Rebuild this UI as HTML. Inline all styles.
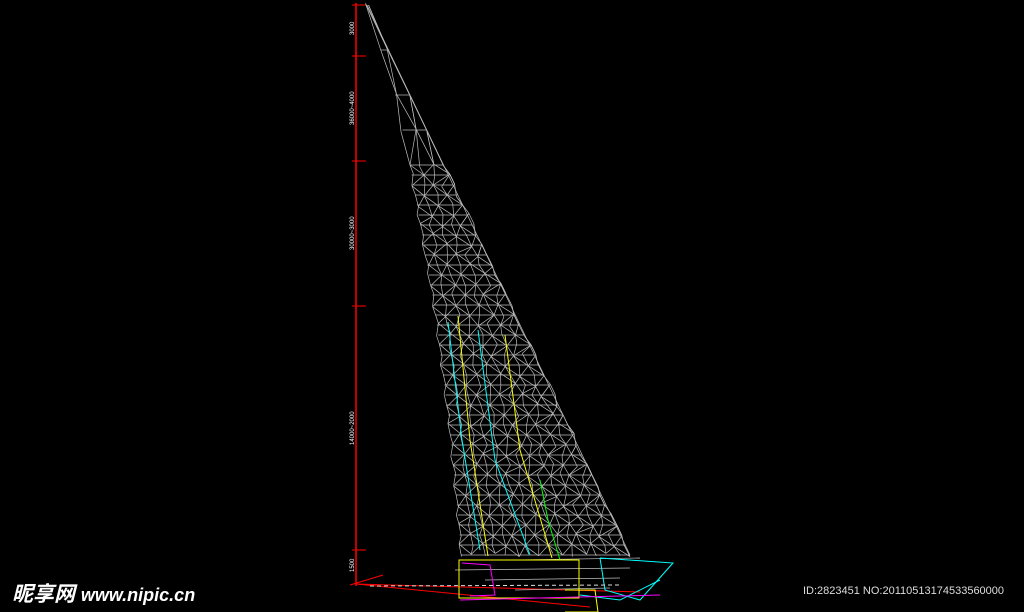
<!DOCTYPE html>
<html><head><meta charset="utf-8"><style>
html,body{margin:0;padding:0;background:#000;width:1024px;height:612px;overflow:hidden}
svg{position:absolute;left:0;top:0}
.wm{position:absolute;left:12px;top:578px;color:#fff;font:italic bold 21px "Liberation Sans","Noto Sans CJK SC",sans-serif}
.wm span{font-size:18px;font-weight:bold}
.id{position:absolute;left:803px;top:585px;color:#ddd;font:11px "Liberation Sans",sans-serif}
</style></head><body>
<svg id="s" width="1024" height="612" viewBox="0 0 1024 612">
<line x1="356" y1="3" x2="356" y2="586" stroke="#f00" stroke-width="1.5"/>
<g stroke="#f00" stroke-width="1">
<line x1="352" y1="5" x2="366" y2="5"/><line x1="352" y1="56" x2="366" y2="56"/>
<line x1="352" y1="161" x2="366" y2="161"/><line x1="352" y1="306" x2="366" y2="306"/>
<line x1="352" y1="550" x2="366" y2="550"/><line x1="350" y1="585" x2="383" y2="575"/>
<line x1="356" y1="584" x2="590" y2="607"/><line x1="356" y1="584" x2="640" y2="592"/>
</g>
<g fill="#fff" font-family="Liberation Sans" font-size="6">
<text transform="translate(354,35) rotate(-90)">3000</text>
<text transform="translate(354,125) rotate(-90)">36000~4000</text>
<text transform="translate(354,250) rotate(-90)">30000~3000</text>
<text transform="translate(354,445) rotate(-90)">14000~2000</text>
<text transform="translate(354,572) rotate(-90)">1500</text>
</g>
<g id="mesh" stroke="#bdbdbd" stroke-width="0.7" fill="none"></g>
<g fill="none" stroke-width="1">
<polyline points="458,316 470,440 488,556" stroke="#ff0"/>
<polyline points="505,335 520,450 552,558" stroke="#ff0"/>
<polyline points="448,322 462,440 480,550" stroke="#0ff"/>
<polyline points="478,330 495,460 530,555" stroke="#0ff"/>
<polyline points="540,480 548,520 560,560" stroke="#0f0"/>
<rect x="459" y="560" width="120" height="38" stroke="#ff0"/>
<polyline points="462,563 490,565 495,595 470,596" stroke="#f0f"/>
<polyline points="600,558 673,563 640,600 605,590 600,558" stroke="#0ff"/>
<polyline points="580,595 620,600 660,580" stroke="#0ff"/>
<polyline points="565,590 595,590 598,612 565,612" stroke="#ff0"/>
<line x1="460" y1="600" x2="660" y2="595" stroke="#f0f"/>
<line x1="370" y1="586" x2="620" y2="585" stroke="#ddd" stroke-dasharray="4,3"/>
</g>
</svg>
<div class="wm">昵享网 <span>www.nipic.cn</span></div>
<div class="id">ID:2823451 NO:20110513174533560000</div>
<script>
var g=document.getElementById('mesh'),h='';
var Lp=[[5,367],[95,395],[165,410],[310,435],[430,450],[560,462]];
function L(y){for(var i=1;i<Lp.length;i++){if(y<=Lp[i][0]){var a=Lp[i-1],b=Lp[i];return a[1]+(y-a[0])*(b[1]-a[1])/(b[0]-a[0]);}}return 462;}
function R(y){return 367+(y-5)*263/550;}
function ln(a,b,c,d){h+='<line x1="'+a.toFixed(1)+'" y1="'+b.toFixed(1)+'" x2="'+c.toFixed(1)+'" y2="'+d.toFixed(1)+'"/>';}
ln(367,5,R(555),555);
var ys=[5,50,95,130,165];for(var y=175;y<=560;y+=10)ys.push(y);
var prev=null;
for(var k=0;k<ys.length;k++){var y=ys[k],l=L(y),r=R(y),n=Math.max(1,Math.round((r-l)/11));var pts=[];
for(var j=0;j<=n;j++)pts.push([l+(r-l)*j/n+((j*5+k*7)%3-1)*1.5,y+((j*7+k*3)%5-2)*0.8]);
ln(l,y,r,y);
if(prev){for(var j=0;j<pts.length;j++){var p=prev[Math.min(j,prev.length-1)];ln(p[0],p[1],pts[j][0],pts[j][1]);
var q=prev[Math.min(j+1,prev.length-1)];if((j+k)%2==0)ln(q[0],q[1],pts[j][0],pts[j][1]);else if(j+1<pts.length)ln(p[0],p[1],pts[j+1][0],pts[j+1][1]);}}
prev=pts;}
for(var y=560;y<600;y+=10)ln(455+((y/10)%3)*30,y,640-(y-560),y-2);
g.innerHTML=h;
</script>
</body></html>
